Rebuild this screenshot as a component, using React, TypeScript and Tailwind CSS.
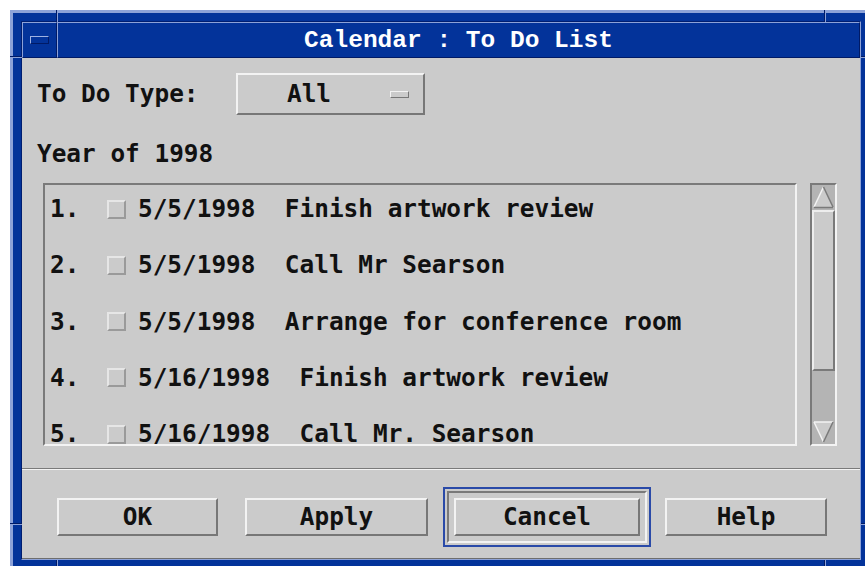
import React from 'react';

// Motif-style 3D bevels
const raised =
  'border-2 border-t-[#f3f3f3] border-l-[#f3f3f3] border-b-[#777777] border-r-[#777777]';
const sunken =
  'border-2 border-t-[#7a7a7a] border-l-[#7a7a7a] border-b-[#f3f3f3] border-r-[#f3f3f3]';

const todos = [
  { date: '5/5/1998', text: 'Finish artwork review' },
  { date: '5/5/1998', text: 'Call Mr Searson' },
  { date: '5/5/1998', text: 'Arrange for conference room' },
  { date: '5/16/1998', text: 'Finish artwork review' },
  { date: '5/16/1998', text: 'Call Mr. Searson' },
];

// resize-corner notches drawn over the window frame
const notches = [
  'left-[43px] top-[-3px] w-[2px] h-[12px] border-l border-r',
  'left-[811px] top-[-3px] w-[2px] h-[12px] border-l border-r',
  'left-[43px] top-[547px] w-[2px] h-[12px] border-l border-r',
  'left-[811px] top-[547px] w-[2px] h-[12px] border-l border-r',
  'left-[-3px] top-[43px] w-[12px] h-[2px] border-t border-b',
  'left-[-3px] top-[510px] w-[12px] h-[2px] border-t border-b',
  'left-[848px] top-[43px] w-[12px] h-[2px] border-t border-b',
  'left-[848px] top-[510px] w-[12px] h-[2px] border-t border-b',
];

const ArrowUp = () => (
  <svg width="23" height="24" viewBox="0 0 23 24" className="block">
    <polygon points="11.5,2 21,22 2,22" fill="#cbcbcb" />
    <line x1="11.5" y1="2" x2="2" y2="22" stroke="#f3f3f3" strokeWidth="1.5" />
    <line x1="11.5" y1="2" x2="21" y2="22" stroke="#7a7a7a" strokeWidth="1.5" />
    <line x1="2" y1="22.5" x2="21" y2="22.5" stroke="#7a7a7a" strokeWidth="1.5" />
  </svg>
);

const ArrowDown = () => (
  <svg width="23" height="23" viewBox="0 0 23 23" className="block">
    <polygon points="2,1 21,1 11.5,21" fill="#cbcbcb" />
    <line x1="2" y1="1" x2="21" y2="1" stroke="#f3f3f3" strokeWidth="1.5" />
    <line x1="2" y1="1" x2="11.5" y2="21" stroke="#f3f3f3" strokeWidth="1.5" />
    <line x1="21" y1="1" x2="11.5" y2="21" stroke="#7a7a7a" strokeWidth="1.5" />
  </svg>
);

const Button: React.FC<{ label: string; className?: string }> = ({ label, className = '' }) => (
  <div className={`h-[38px] flex items-center justify-center bg-[#cbcbcb] ${raised} ${className}`}>
    {label}
  </div>
);

export default function App() {
  return (
    <div className="w-[865px] h-[566px] overflow-hidden bg-white pt-[10px] pl-[10px]">
      <div className="relative w-[862px] h-[561px] bg-[#03339a] border-t-[3px] border-l-[3px] border-[#8da2d8] pt-[8px] pl-[8px]">
        {notches.map((n, i) => (
          <div key={i} className={`absolute border-[#001a66] border-r-[#8da2d8] border-b-[#8da2d8] ${n}`} />
        ))}

        <div className="w-[840px] border border-t-[#001e70] border-l-[#001e70] border-b-[#8da2d8] border-r-[#8da2d8]">
          {/* title bar */}
          <div className="flex h-[36px]">
            <div className="w-[35px] flex items-center justify-center border border-t-[#8da2d8] border-l-[#8da2d8] border-b-[#001a66] border-r-[#001a66]">
              <div className="w-[19px] h-[8px] border border-t-[#9fb2e2] border-l-[#9fb2e2] border-b-[#001a66] border-r-[#001a66] bg-[#03339a]" />
            </div>
            <div className="flex-1 flex items-center justify-center pt-[3px] border border-t-[#8da2d8] border-l-[#8da2d8] border-b-[#001a66] border-r-[#001a66] font-['Liberation_Mono',monospace] font-bold text-[24.5px] text-white whitespace-pre">
              Calendar : To Do List
            </div>
          </div>

          {/* dialog body */}
          <div className="bg-[#cbcbcb] h-[501px] border-b border-[#6e6e6e] flex flex-col font-['DejaVu_Sans_Mono',monospace] font-bold text-[24.4px] leading-[28px] text-[#111]">
            <div className="flex items-center pl-[15px] pt-[15px]">
              <span className="w-[199px]">To Do Type:</span>
              <div className={`w-[189px] h-[42px] flex items-center pl-[49px] pr-[14px] ${raised}`}>
                <span className="flex-1">All</span>
                <span className="w-[19px] h-[7px] border border-t-[#f3f3f3] border-l-[#f3f3f3] border-b-[#777777] border-r-[#777777]" />
              </div>
            </div>

            <div className="pl-[15px] mt-[25px]">Year of 1998</div>

            <div className="flex pl-[21px] mt-[15px] gap-[13px]">
              <div className={`w-[754px] h-[263px] overflow-hidden pl-[5px] pt-[10px] ${sunken}`}>
                {todos.map((t, i) => (
                  <div key={i} className="h-[56.3px] flex items-start">
                    <div className="flex items-center h-[28px]">
                      <span className="w-[57px]">{i + 1}.</span>
                      <span className="w-[19px] h-[19px] border-2 border-t-[#e6e6e6] border-l-[#e6e6e6] border-b-[#9a9a9a] border-r-[#9a9a9a] mr-[12px]" />
                      <span className="whitespace-pre">{`${t.date}  ${t.text}`}</span>
                    </div>
                  </div>
                ))}
              </div>

              {/* vertical scrollbar */}
              <div className={`w-[27px] h-[263px] bg-[#b4b4b4] flex flex-col ${sunken}`}>
                <ArrowUp />
                <div className="h-[1px]" />
                <div className="h-[161px] bg-[#cbcbcb] border-2 border-t-[#ededed] border-l-[#ededed] border-b-[#7a7a7a] border-r-[#7a7a7a]" />
                <div className="flex-1" />
                <ArrowDown />
              </div>
            </div>

            <div className="mt-[22px] h-[2px] border-t border-b border-t-[#7a7a7a] border-b-[#f3f3f3]" />

            <div className="flex items-center pl-[35px] mt-[17px]">
              <Button label="OK" className="w-[161px]" />
              <Button label="Apply" className="w-[183px] ml-[27px]" />
              <div className="ml-[15px] border-2 border-[#2a4aa8] p-[2px]">
                <div className={`p-[5px] ${sunken}`}>
                  <Button label="Cancel" className="w-[186px]" />
                </div>
              </div>
              <Button label="Help" className="w-[162px] ml-[14px]" />
            </div>
          </div>
        </div>
      </div>
    </div>
  );
}
